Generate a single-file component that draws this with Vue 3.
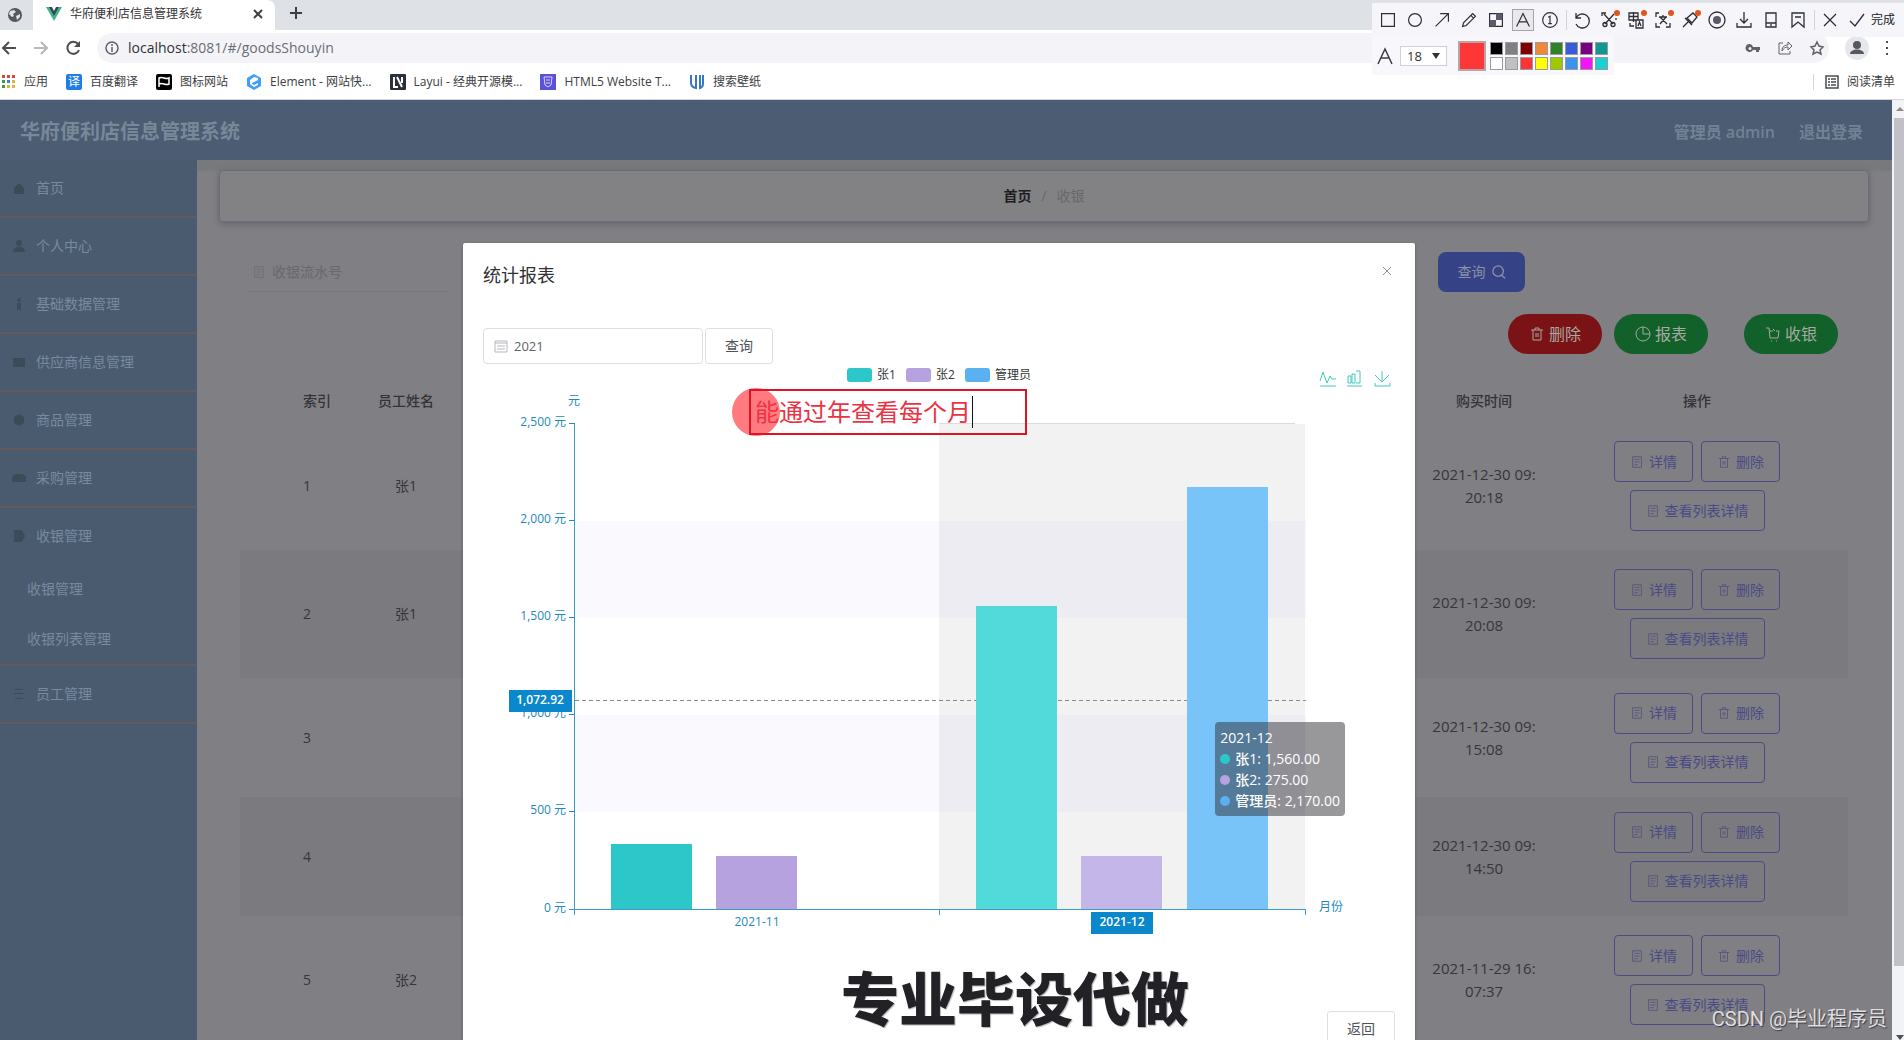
<script setup>
import { ref } from 'vue'

const year = ref('2021')
const note = ref('能通过年查看每个月')
const fontSize = ref('18')
const serial = ref('')

const drawTools = [
  { name: '矩形', d: 'M5 5h14v14H5z' },
  { name: '椭圆', d: 'M12 5a7 7 0 1 0 0 14a7 7 0 1 0 0-14z' },
  { name: '箭头', d: 'M5 19L19 5M10 5h9v9' },
  { name: '画笔', d: 'M5 19l1-4L16 5l3 3L9 18zM14 7l3 3' },
  { name: '马赛克', d: 'M5 5h14v14H5z', fill: 'M12 5h7v7h-7zM5 12h7v7H5z' },
  { name: '文字', d: 'M5 19L12 5l7 14M8 14h8', active: true },
  { name: '序号', d: 'M12 4a8 8 0 1 0 0 16a8 8 0 1 0 0-16zM10 9l2-1v8M10 16h4' },
]
const editTools = [
  { name: '撤销', d: 'M6 5v5h5M6 10a7 7 0 1 1 0 6' },
  { name: '裁剪', d: 'M7 6l9 10M17 6L8 16M5 8V5h4M19 12V10M6 16.500a2 2 0 1 0 4 0a2 2 0 1 0-4 0M14 16.500a2 2 0 1 0 4 0a2 2 0 1 0-4 0', dot: true },
  { name: '翻译', d: 'M5 5h9v7H5zM9.500 4v10M5 8.500h9M12 12h7v8h-7zM14 18l1.500-4l1.500 4M6 15v3h4', dot: true },
  { name: '识别', d: 'M5 9V5h3M5 15v4h4M19 15v4h-4M8 9h8M12 7v2M9 16l6-7M9 9l7 7', dot: true },
  { name: '贴图', d: 'M5 19l5-5M7 10l7 7M9 10l6-5l4 4l-5 6z', dot: true },
  { name: '录屏', d: 'M12 4a8 8 0 1 0 0 16a8 8 0 1 0 0-16z', fill: 'M12 8a4 4 0 1 0 0 8a4 4 0 1 0 0-8z' },
  { name: '保存', d: 'M12 4v11M8 11l4 4l4-4M5 15v4h14v-4' },
  { name: '手机', d: 'M7 5h10v14H7zM7 15h10M12 16v2' },
  { name: '收藏', d: 'M6 5h12v14l-6-5l-6 5zM9 9h6' },
]
const endTools = [
  { name: '取消', d: 'M6 6l12 12M18 6L6 18' },
  { name: '确认', d: 'M5 13l5 5L19 6' },
]
const swatches = [
  '#000000', '#808080', '#800000', '#f0883a', '#2f8526', '#3a5bd9', '#7b0080', '#0f9890',
  '#ffffff', '#c0c0c0', '#fa3535', '#ffff00', '#9ecb00', '#3b93ee', '#f316f5', '#1cd0cf',
]
const dots = ['#d9463a', '#d9463a', '#d9463a', '#3b9a52', '#3f7fe0', '#e0b53a', '#3b9a52', '#e0b53a', '#e0b53a']

const menu = [
  { text: '首页', d: 'M3 8L8 3l5 5v6H3z' },
  { text: '个人中心', d: 'M8 2a3 3 0 1 1 0 6a3 3 0 1 1 0-6M2 14c0-7 12-7 12 0z' },
  { text: '基础数据管理', d: 'M8 2a2 2 0 1 1 0 4a2 2 0 1 1 0-4M6 7h4v7H6z' },
  { text: '供应商信息管理', d: 'M2 4h12v9H2z' },
  { text: '商品管理', d: 'M3 5l5-3l5 3v6l-5 3l-5-3z' },
  { text: '采购管理', d: 'M1 6l4-2h6l4 2v6H1z' },
  { text: '收银管理', d: 'M3 2h8l3 6l-3 6H3z', children: ['收银管理', '收银列表管理'] },
  { text: '员工管理', d: 'M4 3h8v1H4zM3 7h10v1H3zM4 12h8v1H4z' },
]

const rows = [
  { no: 1, name: '张1', day: '2021-12-30 09:', time: '20:18', tall: 'lg' },
  { no: 2, name: '张1', day: '2021-12-30 09:', time: '20:08', tall: 'lg' },
  { no: 3, name: '', day: '2021-12-30 09:', time: '15:08', tall: 'sm' },
  { no: 4, name: '', day: '2021-12-30 09:', time: '14:50', tall: 'sm' },
  { no: 5, name: '张2', day: '2021-11-29 16:', time: '07:37', tall: 'lg' },
]
const docIcon = 'M3 2h10v12H3zM5 5h6M5 8h6M5 11h4'
const binIcon = 'M2 4h12M4 4v10h8V4M6 4V2h4v2M7 7v4M9 7v4'

const legend = [
  { name: '张1', color: '#2ec7c9', x: 364 },
  { name: '张2', color: '#b6a2de', x: 423 },
  { name: '管理员', color: '#5ab1ef', x: 482 },
]
const ticks = [
  { label: '2,500 元', y: 61 },
  { label: '2,000 元', y: 158 },
  { label: '1,500 元', y: 255 },
  { label: '1,000 元', y: 352 },
  { label: '500 元', y: 449 },
  { label: '0 元', y: 547 },
]
const bars = [
  { x: 128, top: 481, color: '#2ec7c9' },
  { x: 233, top: 493, color: '#b6a2de' },
  { x: 493, top: 243, color: '#52d9d9' },
  { x: 598, top: 493, color: '#c5b6e9' },
  { x: 704, top: 124, color: '#78c3f7' },
]
const tips = [
  { name: '张1', value: '1,560.00', color: '#2ec7c9' },
  { name: '张2', value: '275.00', color: '#b6a2de' },
  { name: '管理员', value: '2,170.00', color: '#5ab1ef' },
]
</script>

<template>
  <div class="screen">
    <header class="browser">
      <div class="tabs">
        <div class="pinned">
          <svg width="16" height="16" viewBox="0 0 16 16"><circle cx="8" cy="8" r="7" fill="#55585d" /><path d="M3 4l4-1l2 2l-3 2l1 2l-2 1l-3-3zM9 9l4-2v3l-3 3z" fill="#dee1e6" /></svg>
        </div>
        <div class="tab">
          <svg width="16" height="14" viewBox="0 0 16 14"><path d="M0 0h4l4 7l4-7h4L8 14z" fill="#41b883" /><path d="M3 0h3l2 4l2-4h3L8 9z" fill="#35495e" /></svg>
          <span class="tab-title">华府便利店信息管理系统</span>
          <button class="bare" aria-label="关闭标签页"><svg width="10" height="10" viewBox="0 0 10 10"><path d="M1 1l8 8M9 1L1 9" stroke="#3c4043" stroke-width="2" /></svg></button>
        </div>
        <button class="bare plus" aria-label="新标签页"><svg width="14" height="14" viewBox="0 0 14 14"><path d="M7 1v12M1 7h12" stroke="#3c4043" stroke-width="2" /></svg></button>
      </div>
      <div class="address">
        <button class="bare" aria-label="后退"><svg width="16" height="16" viewBox="0 0 16 16"><path d="M15 8H2M8 2L2 8l6 6" fill="none" stroke="#4a4d51" stroke-width="2" /></svg></button>
        <button class="bare" aria-label="前进"><svg width="16" height="16" viewBox="0 0 16 16"><path d="M1 8h13M8 2l6 6l-6 6" fill="none" stroke="#b5b7bb" stroke-width="2" /></svg></button>
        <button class="bare" aria-label="刷新"><svg width="16" height="16" viewBox="0 0 16 16"><path d="M13 4a6 6 0 1 0 1 6" fill="none" stroke="#4a4d51" stroke-width="2" /><path d="M15 1v6H9z" fill="#4a4d51" /></svg></button>
        <div class="url">
          <svg width="14" height="14" viewBox="0 0 14 14"><circle cx="7" cy="7" r="6" fill="none" stroke="#5f6368" stroke-width="1.500" /><path d="M7 6v5M7 3v2" stroke="#5f6368" stroke-width="1.500" /></svg>
          <span class="link"><b>localhost</b>:8081/#/goodsShouyin</span>
          <div class="url-icons">
            <svg width="16" height="16" viewBox="0 0 16 16"><path d="M5 4a4 4 0 1 0 3 6h3v2h3v-2h1V7H8a4 4 0 0 0-3-3zM5 7a1 1 0 1 1 0 3a1 1 0 1 1 0-3z" fill="#5f6368" /></svg>
            <svg width="16" height="16" viewBox="0 0 16 16"><path d="M6 3H2v11h11v-3M5 11c0-5 3-6 6-6V2l4 4l-4 4V7c-3 0-4 1-6 4z" fill="none" stroke="#5f6368" /></svg>
            <svg width="16" height="16" viewBox="0 0 16 16"><path d="M8 2l2 4l4 1l-3 3l1 4l-4-2l-4 2l1-4l-3-3l4-1z" fill="none" stroke="#5f6368" stroke-width="1.500" /></svg>
          </div>
        </div>
        <svg width="24" height="24" viewBox="0 0 24 24"><circle cx="12" cy="12" r="12" fill="#e6e7eb" /><circle cx="12" cy="9" r="4" fill="#55585d" /><path d="M5 18c0-6 14-6 14 0z" fill="#55585d" /></svg>
        <svg width="4" height="16" viewBox="0 0 4 16"><path d="M1 1h2v2H1zM1 7h2v2H1zM1 13h2v2H1z" fill="#4a4d51" /></svg>
      </div>
      <nav class="bookmarks">
        <a href="#"><svg width="14" height="14" viewBox="0 0 14 14"><rect v-for="(c, i) in dots" :key="i" :x="(i % 3) * 5" :y="Math.floor(i / 3) * 5" width="3" height="3" :fill="c" /></svg>应用</a>
        <a href="#"><span class="yi">译</span>百度翻译</a>
        <a href="#"><svg width="16" height="16" viewBox="0 0 16 16"><rect width="16" height="16" rx="2" /><path d="M3 13V4q2-1 5 0t5 0v6q-2 1-5 0t-5 0" fill="none" stroke="#fff" stroke-width="1.500" /></svg>图标网站</a>
        <a href="#"><svg width="16" height="16" viewBox="0 0 16 16"><path d="M8 0l7 4v8l-7 4l-7-4V4z" fill="#409eff" /><path d="M12 4L8 3L4 6v4l4 3l4-2V9l-4 2l-2-1V9l6-3z" fill="#fff" /></svg>Element - 网站快...</a>
        <a href="#"><svg width="16" height="16" viewBox="0 0 16 16"><rect width="16" height="16" rx="1" fill="#2b2f3a" /><path d="M4 3v10h4M7 3l5 10M12 3v6" fill="none" stroke="#fff" stroke-width="2" /></svg>Layui - 经典开源模...</a>
        <a href="#"><svg width="16" height="16" viewBox="0 0 16 16"><rect width="16" height="16" fill="#5c52d6" /><path d="M4 3h8l-1 8l-3 2l-3-2zM6 6h4M6 9h4" fill="none" stroke="#d6d2ff" /></svg>HTML5 Website T...</a>
        <a href="#"><svg width="16" height="16" viewBox="0 0 16 16"><path d="M2 1v8q0 4 5 5V1M11 1v13q3-1 3-4V1" fill="none" stroke="#3578c4" stroke-width="2" /></svg>搜索壁纸</a>
        <a href="#" class="reading"><svg width="14" height="14" viewBox="0 0 14 14"><path d="M1 1h12v12H1zM3 4h2M3 7h2M3 10h2M6 4h5M6 7h5M6 10h5" fill="none" stroke="#4a4d51" stroke-width="1.500" /></svg>阅读清单</a>
      </nav>
    </header>

    <div class="page">
      <div class="app">
        <header class="top">
          <h1>华府便利店信息管理系统</h1>
          <span>管理员 admin</span>
          <a href="#">退出登录</a>
        </header>
        <div class="cols">
          <aside class="side">
            <div v-for="m in menu" :key="m.text" class="group">
              <a href="#" class="item"><svg width="16" height="16" viewBox="0 0 16 16"><path :d="m.d" fill="#3c4b58" /></svg>{{ m.text }}</a>
              <a v-for="c in m.children" :key="c" href="#" class="sub">{{ c }}</a>
            </div>
          </aside>
          <main class="main">
            <nav class="crumbs"><b>首页</b><i>/</i><span>收银</span></nav>
            <div class="search">
              <label class="serial">
                <svg width="14" height="14" viewBox="0 0 16 16"><path :d="docIcon" fill="none" stroke="#6e6e73" /></svg>
                <input v-model="serial" placeholder="收银流水号" />
              </label>
              <button class="query">查询<svg width="14" height="14" viewBox="0 0 16 16"><path d="M7 1a6 6 0 1 0 0 12a6 6 0 1 0 0-12M11 12l4 3" fill="none" stroke="#8c90a8" stroke-width="1.500" /></svg></button>
            </div>
            <div class="actions">
              <button class="pill red"><svg width="16" height="16" viewBox="0 0 16 16"><path :d="binIcon" /></svg>删除</button>
              <button class="pill green"><svg width="16" height="16" viewBox="0 0 16 16"><path d="M8 1a7 7 0 1 0 7 7H8zM8 1a7 7 0 0 1 7 7" /></svg>报表</button>
              <button class="pill green apart"><svg width="16" height="16" viewBox="0 0 16 16"><path d="M1 2h3l1 10h8l1-7h-3M8 5H5M8 3l2 2M6 15h1M11 15h1" /></svg>收银</button>
            </div>
            <table>
              <colgroup><col class="c-check" /><col class="c-no" /><col class="c-name" /><col /><col class="c-date" /><col class="c-ops" /></colgroup>
              <thead>
                <tr><th></th><th class="left">索引</th><th>员工姓名</th><th></th><th>购买时间</th><th>操作</th></tr>
              </thead>
              <tbody>
                <tr v-for="r in rows" :key="r.no" :class="r.tall">
                  <td></td>
                  <td class="left">{{ r.no }}</td>
                  <td>{{ r.name }}</td>
                  <td></td>
                  <td class="date">{{ r.day }}<br />{{ r.time }}</td>
                  <td>
                    <div class="ops">
                      <button><svg width="14" height="14" viewBox="0 0 16 16"><path :d="docIcon" /></svg>详情</button>
                      <button><svg width="14" height="14" viewBox="0 0 16 16"><path :d="binIcon" /></svg>删除</button>
                      <button><svg width="14" height="14" viewBox="0 0 16 16"><path :d="docIcon" /></svg>查看列表详情</button>
                    </div>
                  </td>
                </tr>
              </tbody>
            </table>
          </main>
        </div>
      </div>
      <div class="scroll">
        <svg width="8" height="18" viewBox="0 0 8 18"><path d="M0 11l4-4l4 4z" fill="#8a8a8e" /></svg>
        <div class="thumb"></div>
        <svg width="8" height="6" viewBox="0 0 8 6"><path d="M0 1h8L4 6z" fill="#505055" /></svg>
      </div>

      <div class="layer">
        <section class="dialog" role="dialog" aria-label="统计报表">
          <div class="dialog-head">
            <h2>统计报表</h2>
            <button class="bare" aria-label="关闭"><svg width="10" height="10" viewBox="0 0 10 10"><path d="M1 1l8 8M9 1L1 9" stroke="#909399" /></svg></button>
          </div>
          <div class="filter">
            <label class="year">
              <svg width="14" height="14" viewBox="0 0 14 14"><path d="M1 2h12v11H1zM1 4h12M3 7h8M3 10h8" fill="none" stroke="#b4b8c4" /></svg>
              <input v-model="year" aria-label="年份" />
            </label>
            <button class="plain">查询</button>
          </div>
          <div class="chart">
            <svg class="plot" viewBox="0 0 912 600">
              <g v-for="l in legend" :key="l.name">
                <rect :x="l.x" y="5" width="25" height="14" rx="3" :fill="l.color" />
                <text :x="l.x + 30" y="16" fill="#333">{{ l.name }}</text>
              </g>
              <g fill="none" stroke="#42c9bd">
                <path d="M837 18l3-9l4 11l3-7l2 3h4M837 23h16" />
                <path d="M865 13h3v7h-3zM869 11h3v9h-3zM873 8h4v12h-4M864 23h15" />
                <path d="M899 8v11M892 12l7 7l7-7M892 20v3h15v-3" />
              </g>
              <rect x="92" y="158" width="731" height="97" fill="#faf9fe" />
              <rect x="92" y="352" width="731" height="97" fill="#faf9fe" />
              <rect x="456" y="61" width="366" height="486" fill="#8c8c96" fill-opacity="0.110" />
              <path d="M456 60.500h356" stroke="#dcdcde" />
              <path d="M92 337.500h731" stroke="#8a8a8e" stroke-dasharray="4 3" />
              <rect v-for="b in bars" :key="b.x" :x="b.x" :y="b.top" width="81" :height="546 - b.top" :fill="b.color" />
              <g fill="#2389bb" text-anchor="end">
                <text v-for="t in ticks" :key="t.y" x="83" :y="t.y + 2">{{ t.label }}</text>
              </g>
              <path v-for="t in ticks" :key="t.label" :d="`M86 ${t.y - 0.5}h5`" stroke="#1b8cbf" />
              <path d="M91.500 60v492M86 546.500h737M456.500 547v5M822.500 547v5" stroke="#3b9bc8" fill="none" />
              <text x="91" y="42" fill="#2389bb" text-anchor="middle">元</text>
              <text x="836" y="548" fill="#2389bb">月份</text>
              <text x="274" y="563" fill="#2389bb" text-anchor="middle">2021-11</text>
              <rect x="26" y="327" width="63" height="22" fill="#0a88cb" />
              <text x="57" y="341" fill="#fff" class="strong" text-anchor="middle">1,072.92</text>
              <rect x="608" y="549" width="62" height="22" fill="#0a88cb" />
              <text x="639" y="563" fill="#fff" class="strong" text-anchor="middle">2021-12</text>
            </svg>
            <div class="tip">
              <div>2021-12</div>
              <div v-for="t in tips" :key="t.name"><i :style="{ background: t.color }"></i>{{ t.name }}: {{ t.value }}</div>
            </div>
            <div class="spot"></div>
            <div class="note"><input v-model="note" aria-label="标注文字" /><i></i></div>
          </div>
          <div class="dialog-foot"><button class="plain">返回</button></div>
        </section>
      </div>
    </div>

    <div class="toolbar">
      <div class="tools">
        <button v-for="t in drawTools" :key="t.name" class="tool" :class="{ active: t.active }" :aria-label="t.name">
          <svg width="22" height="22" viewBox="0 0 24 24"><path :d="t.d" /><path v-if="t.fill" :d="t.fill" class="solid" /></svg>
        </button>
        <span class="rule"></span>
        <button v-for="t in editTools" :key="t.name" class="tool" :aria-label="t.name">
          <svg width="24" height="24" viewBox="0 0 24 24"><path :d="t.d" /><path v-if="t.fill" :d="t.fill" class="solid" /><circle v-if="t.dot" cx="20" cy="5" r="3" class="alert" /></svg>
        </button>
        <span class="rule"></span>
        <button v-for="t in endTools" :key="t.name" class="tool" :aria-label="t.name">
          <svg width="24" height="24" viewBox="0 0 24 24"><path :d="t.d" /></svg>
        </button>
        <span class="done">完成</span>
      </div>
      <div class="options">
        <svg width="18" height="18" viewBox="0 0 18 18"><path d="M2 17L9 2l7 15M5 11h8" fill="none" stroke="#3a3a44" stroke-width="1.500" /></svg>
        <span class="pick">
          <select v-model="fontSize" aria-label="字号"><option>18</option></select>
          <svg width="8" height="6" viewBox="0 0 8 6"><path d="M0 0h8L4 6z" fill="#333" /></svg>
        </span>
        <span class="current"></span>
        <div class="palette"><button v-for="c in swatches" :key="c" :aria-label="c" :style="{ background: c }"></button></div>
      </div>
    </div>

    <div class="caption">专业毕设代做</div>
    <div class="mark">CSDN @毕业程序员</div>
  </div>
</template>

<style>
body { margin: 0; overflow: hidden; }
</style>

<style scoped>
* { box-sizing: border-box; }
.screen {
  position: relative;
  display: flex;
  flex-direction: column;
  height: 100vh;
  overflow: hidden;
  background: #fff;
  color: #333;
  font-family: "Open Sans", "Noto Sans CJK SC", sans-serif;
  font-size: 14px;
  line-height: 20px;
}
button, input, select { font: inherit; color: inherit; margin: 0; padding: 0; }
a { color: inherit; text-decoration: none; }
svg { flex: none; display: block; }
i { font-style: normal; }
.bare { display: flex; border: 0; background: none; }

/* browser frame */
.browser { flex: none; height: 100px; background: #fff; border-bottom: 1px solid #d5d6da; }
.tabs { display: flex; align-items: center; height: 30px; background: #dee1e6; }
.pinned { width: 33px; height: 26px; padding: 5px 7px; }
.tab { display: flex; align-items: center; width: 242px; height: 30px; padding: 0 12px 2px 13px; background: #fff; border-radius: 0 8px 0 0; font-size: 12px; }
.tab-title { flex: 1; margin-left: 8px; }
.plus { margin: 0 0 4px 14px; }
.address { display: flex; align-items: center; height: 36px; padding: 0 15px 0 1px; gap: 16px; }
.url { flex: 1; display: flex; align-items: center; gap: 9px; height: 30px; padding: 0 4px 0 8px; border-radius: 15px; background: #f4f4f8; color: #6b6e73; }
.link { flex: 1; }
.url b { font-weight: 400; color: #2f3136; }
.url-icons { display: flex; gap: 16px; }
.bookmarks { display: flex; align-items: center; gap: 18px; height: 32px; padding: 0 9px 0 2px; font-size: 12px; color: #3c4043; }
.bookmarks a { display: flex; align-items: center; gap: 8px; }
.bookmarks .reading { margin-left: auto; padding-left: 11px; border-left: 1px solid #d5d6da; height: 16px; }
.yi { width: 16px; height: 16px; border-radius: 2px; background: #1f7de6; color: #fff; font-size: 12px; line-height: 16px; text-align: center; }

/* store admin page behind the dialog */
.page { position: relative; flex: 1; display: flex; min-height: 0; overflow: hidden; }
.app { flex: 1; display: flex; flex-direction: column; min-width: 0; background: #807f83; }
.top { flex: none; display: flex; align-items: center; height: 60px; padding: 3px 29px 0 20px; gap: 24px; background: #4b5c73; color: #718295; font-size: 16px; font-weight: 600; }
.top h1 { flex: 1; margin: 0; font-size: 20px; font-weight: 700; color: #778899; }
.cols { flex: 1; display: flex; min-height: 0; }
.side { flex: none; width: 197px; background: #4a5b70; color: #778a9f; }
.group { border-bottom: 2px solid #625a5d; }
.item { display: flex; align-items: center; height: 56px; padding-left: 11px; gap: 9px; }
.sub { display: block; height: 50px; padding-left: 27px; line-height: 50px; }
.main { flex: 1; min-width: 0; padding: 10px 44px 0 43px; background: linear-gradient(#77797d 0, #77797d 10px, #807f83 12px); }
.crumbs { display: flex; align-items: center; justify-content: center; gap: 10px; height: 52px; margin: 0 -21px; border: 1px solid #6b6b7c; border-radius: 4px; background: #828184; box-shadow: 0 2px 6px #65656d; color: #68686c; }
.crumbs b { color: #1d1d22; }
.search { display: flex; justify-content: space-between; margin-top: 30px; padding: 0 323px 0 8px; }
.serial { display: flex; align-items: center; gap: 6px; width: 200px; height: 40px; padding-left: 4px; border-bottom: 1px solid #76767b; }
.serial input { width: 160px; border: 0; background: none; outline: 0; }
.serial input::placeholder { color: #68686d; opacity: 1; }
.query { display: flex; align-items: center; justify-content: center; gap: 6px; width: 87px; height: 40px; border: 0; border-radius: 8px; background: #354286; color: #8c90a8; }
.actions { display: flex; justify-content: flex-end; gap: 12px; margin-top: 22px; padding-right: 10px; }
.pill { display: flex; align-items: center; justify-content: center; gap: 4px; width: 94px; height: 40px; border: 0; border-radius: 20px; color: #a5aaa2; font-size: 16px; }
.pill path { fill: none; stroke: #a5aaa2; }
.red { background: #7a1216; }
.green { background: #12602a; }
.apart { margin-left: 24px; }
table { width: 100%; margin-top: 26px; border-collapse: collapse; table-layout: fixed; color: #36363b; text-align: center; }
.c-check { width: 53px; }
.c-no { width: 68px; }
.c-name { width: 90px; }
.c-date { width: 124px; }
.c-ops { width: 302px; }
th { height: 42px; padding: 0; font-weight: 500; color: #333338; }
td { padding: 0; }
.left { padding-left: 10px; text-align: left; }
tr.lg { height: 128px; }
tr.sm { height: 119px; }
tbody tr:nth-child(even) { background: #7b7a7e; }
.date { font-size: 15px; line-height: 23px; }
.ops { display: flex; flex-wrap: wrap; justify-content: center; gap: 8px; padding: 0 60px; }
.ops button { display: flex; align-items: center; gap: 5px; height: 41px; padding: 0 15px; border: 1px solid #4c4b83; border-radius: 4px; background: none; color: #4a4a86; }
.ops path { fill: none; stroke: #55557f; }
.scroll { flex: none; display: flex; flex-direction: column; align-items: flex-end; width: 12px; background: #f2f3f7; }
.thumb { width: 10px; height: 848px; margin-bottom: auto; background: #bfc1c7; }

/* dialog */
.layer { position: absolute; top: 0; right: 26px; bottom: 0; left: 0; display: flex; align-items: flex-start; justify-content: center; overflow: hidden; }
.dialog { width: 50vw; margin-top: 143px; padding: 19px 20px 30px; background: #fff; border-radius: 2px; box-shadow: 0 1px 3px #55555a; }
.dialog-head { display: flex; align-items: flex-start; justify-content: space-between; }
h2 { margin: 0; font-size: 18px; font-weight: 400; line-height: 26px; color: #303133; }
.dialog-head .bare { padding: 4px 3px; }
.filter { display: flex; gap: 2px; margin-top: 40px; }
.year { display: flex; align-items: center; gap: 6px; width: 220px; height: 36px; padding-left: 10px; border: 1px solid #dcdfe6; border-radius: 4px; }
.year input { width: 160px; border: 0; outline: 0; font-size: 13px; color: #606266; }
.plain { width: 68px; height: 36px; border: 1px solid #dcdfe6; border-radius: 3px; background: #fff; color: #505258; }
.chart { position: relative; margin-top: -1px; }
.plot { width: 100%; height: auto; font-size: 12px; }
.strong { font-weight: 600; }
.tip { position: absolute; top: 359px; right: 50px; padding: 5px; border-radius: 4px; background: rgba(50, 50, 56, 0.500); color: #fff; line-height: 21px; white-space: nowrap; }
.tip i { display: inline-block; width: 10px; height: 10px; margin-right: 5px; border-radius: 5px; }
.tip div + div { font-weight: 500; }
.spot { position: absolute; top: 25px; left: 249px; width: 48px; height: 48px; border-radius: 24px; background: #ff7b80; }
.note { position: absolute; top: 26px; left: 266px; display: flex; align-items: center; width: 278px; height: 46px; padding-left: 4px; border: 2px solid #dc1426; }
.note input { width: 217px; border: 0; outline: 0; background: none; color: #ea3344; font-size: 24px; line-height: 36px; }
.note i { width: 1px; height: 32px; background: #111; }
.dialog-foot { display: flex; justify-content: flex-end; margin-top: 48px; }

/* screenshot toolbar */
.toolbar { position: absolute; top: 3px; right: 0; display: flex; flex-direction: column; align-items: flex-start; }
.tools { display: flex; align-items: center; height: 34px; padding: 0 9px 0 3px; background: #f5f5fa; }
.tool { display: flex; justify-content: center; width: 27px; border: 0; background: none; }
.tool.active svg { background: #e9e9ee; box-shadow: inset 0 0 0 1px #a4a4aa; }
.tool path { fill: none; stroke: #2e2e3a; stroke-width: 1.300; }
.tool .solid { fill: #5a5a68; stroke: none; }
.alert { fill: #e0561f; }
.rule { width: 1px; height: 20px; margin: 0 2px; background: #d2d2d8; }
.done { font-size: 12px; color: #222; }
.options { display: flex; align-items: center; height: 38px; padding: 0 6px 0 4px; background: #f8f8fc; }
.pick { display: flex; align-items: center; width: 47px; height: 20px; margin-left: 6px; padding: 0 6px; border: 1px solid #d0d0d6; background: #fff; }
.pick select { flex: 1; width: 20px; border: 0; background: none; appearance: none; font-size: 13px; line-height: 18px; }
.current { width: 28px; height: 30px; margin: 0 4px 0 11px; border: 2px solid #b5a5a8; background: #ff3636; }
.palette { display: grid; grid-template-columns: repeat(8, 13px); gap: 2px; }
.palette button { height: 13px; border: 1px solid #9a9aa0; }

.caption { position: absolute; top: 963px; left: 841px; color: #212126; font-size: 58px; font-weight: 900; line-height: 72px; text-shadow: 1px 1px 1px #b4b4b8; white-space: nowrap; }
.mark { position: absolute; right: 17px; bottom: 7px; color: #dedee0; font-family: Roboto, "Noto Sans CJK SC", sans-serif; font-size: 20px; line-height: 28px; text-shadow: 1px 1px 1px #3c3c40; }
</style>
